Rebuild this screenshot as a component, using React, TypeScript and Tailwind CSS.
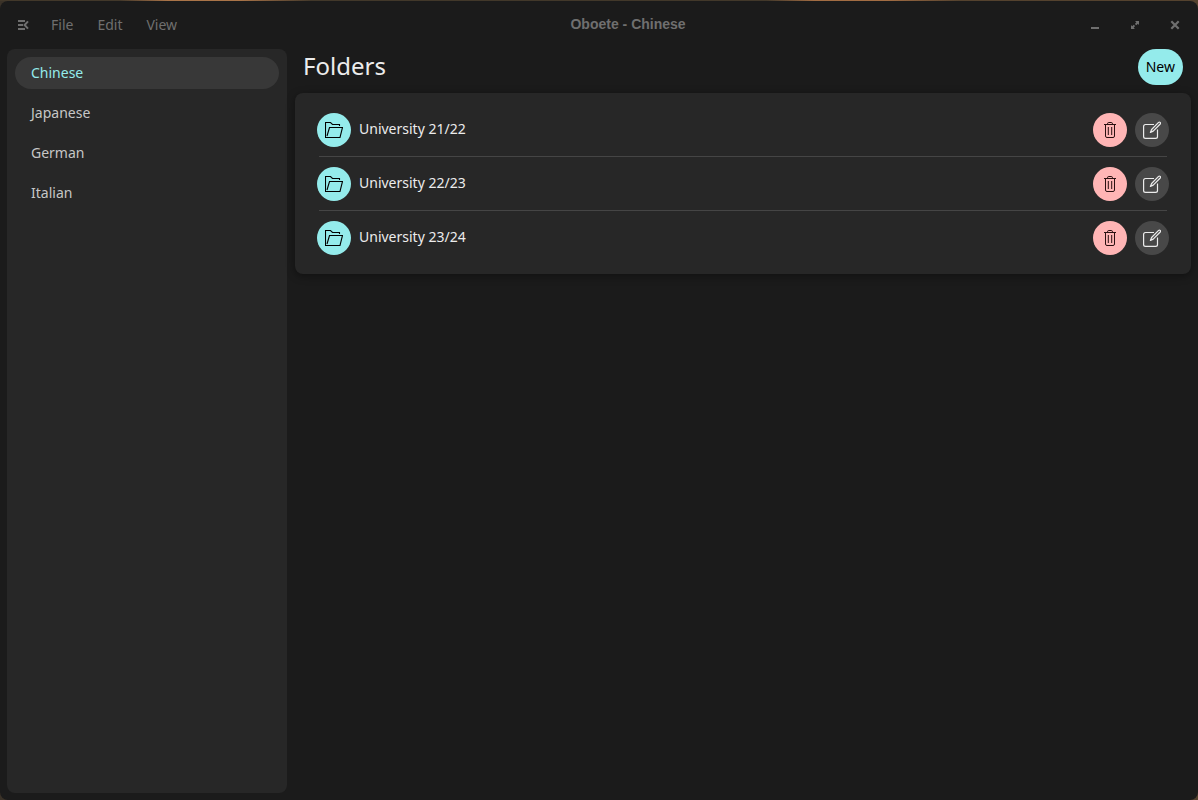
import { useState } from "react";

const languages = ["Chinese", "Japanese", "German", "Italian"];
const folders = ["University 21/22", "University 22/23", "University 23/24"];
const menus = ["File", "Edit", "View"];

function SidebarIcon() {
  return (
    <svg width="16" height="16" viewBox="0 0 16 16" fill="none" stroke="currentColor" strokeWidth="2" aria-hidden="true">
      <path d="M3 4H10M3 8H8M3 12H10" />
      <path d="M13 4.4L9.6 8L13 11.6" />
    </svg>
  );
}

function MinimizeIcon() {
  return (
    <svg width="16" height="16" viewBox="0 0 16 16" fill="currentColor" aria-hidden="true">
      <path d="M4 10H12V12H4Z" />
    </svg>
  );
}

function MaximizeIcon() {
  return (
    <svg width="16" height="16" viewBox="0 0 16 16" fill="currentColor" aria-hidden="true">
      <path d="M8 4H12V8L10.8 6.8L9.3 8.3L7.9 6.9L9.3 5.3Z" />
      <path d="M8 12H4V8L5.2 9.2L6.7 7.7L8.1 9.1L6.7 10.7Z" />
    </svg>
  );
}

function CloseIcon() {
  return (
    <svg width="16" height="16" viewBox="0 0 16 16" fill="none" stroke="currentColor" strokeWidth="2.2" aria-hidden="true">
      <path d="M4.3 4.3L11.7 11.7M11.7 4.3L4.3 11.7" />
    </svg>
  );
}

function FolderIcon() {
  return (
    <svg width="18" height="18" viewBox="0 0 18 18" fill="none" stroke="currentColor" strokeWidth="1.1" aria-hidden="true">
      <path d="M14.5 5V3.5H7.5L5.5 1.5H0.5V16.5H15L17.5 6.5H4.5L2 15" />
    </svg>
  );
}

function TrashIcon() {
  return (
    <svg width="18" height="18" viewBox="0 0 18 18" fill="none" stroke="currentColor" aria-hidden="true">
      <path d="M3 3.5H15M6.5 3.5V2.8Q6.5 1.5 7.8 1.5H10.2Q11.5 1.5 11.5 2.8V3.5" />
      <path d="M4.5 3.5V15Q4.5 16.5 6 16.5H12Q13.5 16.5 13.5 15V3.5" />
      <path d="M7.3 6V14M10.7 6V14" />
    </svg>
  );
}

function EditIcon() {
  return (
    <svg width="18" height="18" viewBox="0 0 18 18" fill="none" stroke="currentColor" strokeWidth="1.2" strokeLinejoin="round" aria-hidden="true">
      <path d="M11 3.5H2.5Q0.6 3.5 0.6 5.4V15.5Q0.6 17.4 2.5 17.4H12.6Q14.5 17.4 14.5 15.5V8.5" />
      <path d="M7.4 11.4L8.6 8.5L15.6 1.4Q16.4 0.7 17.2 1.4Q17.9 2.2 17.2 3L10.2 10.1Z" />
    </svg>
  );
}

const roundButton = "flex size-[34px] shrink-0 items-center justify-center rounded-full";

export default function App() {
  const [active, setActive] = useState("Chinese");

  return (
    <div className="flex min-h-screen flex-col bg-linear-to-r from-[#3a3228] via-[#3b3025] to-[#54422e] font-['Noto_Sans',sans-serif] text-sm text-[#ececec]">
      <div className="h-px bg-[linear-gradient(90deg,#42382a_0%,#42382a_10%,#aa7448_14%,#aa7448_20%,#42382a_26%,#42382a_64%,#a36d43_68%,#a36d43_74%,#54422e_80%)]" />
      <div className="flex grow flex-col rounded-lg bg-[#1b1b1b]">
        <header className="flex h-12 items-center px-[7px] text-[#6f6f6f]">
          <div className="flex items-center">
            <button aria-label="Toggle sidebar" className="flex size-8 items-center justify-center">
              <SidebarIcon />
            </button>
            <nav className="flex">
              {menus.map((name) => (
                <button key={name} className="px-3 leading-8">
                  {name}
                </button>
              ))}
            </nav>
          </div>
          <h1 className="grow pr-3 pb-0.5 text-center font-['Liberation_Sans',sans-serif] font-bold">Oboete - {active}</h1>
          <div className="flex justify-end gap-2">
            <button aria-label="Minimize" className="flex size-8 items-center justify-center">
              <MinimizeIcon />
            </button>
            <button aria-label="Maximize" className="flex size-8 items-center justify-center">
              <MaximizeIcon />
            </button>
            <button aria-label="Close" className="flex size-8 items-center justify-center">
              <CloseIcon />
            </button>
          </div>
        </header>

        <div className="flex grow gap-2 px-[7px] pb-[7px]">
          <nav className="flex w-[280px] shrink-0 flex-col gap-2 rounded-lg bg-[#272727] p-2">
            {languages.map((name) => (
              <button
                key={name}
                onClick={() => setActive(name)}
                className={
                  name === active
                    ? "h-8 rounded-full bg-[#383838] px-4 text-left text-[#94ebeb]"
                    : "h-8 rounded-full px-4 text-left text-[#c6c6c6]"
                }
              >
                {name}
              </button>
            ))}
          </nav>

          <main className="flex min-w-0 grow flex-col gap-2">
            <div className="flex items-center justify-between px-2">
              <h2 className="pb-0.5 text-2xl">Folders</h2>
              <button className="h-9 rounded-full bg-[#94ebeb] px-2 text-black">New</button>
            </div>
            <ul className="rounded-lg bg-[#272727] px-6 py-2.5 shadow-[0_2px_8px_rgba(0,0,0,0.4)]">
              {folders.map((name) => (
                <li key={name} className="border-b border-[#454545] last:border-b-0">
                  <div className="-mx-0.5 flex items-center gap-2 pt-[10px] pb-[9px]">
                    <button aria-label={`Open ${name}`} className={`${roundButton} bg-[#94ebeb] text-black`}>
                      <FolderIcon />
                    </button>
                    <span className="grow pb-0.5">{name}</span>
                    <button aria-label={`Delete ${name}`} className={`${roundButton} bg-[#ffb5b5] text-[#2a1010]`}>
                      <TrashIcon />
                    </button>
                    <button aria-label={`Edit ${name}`} className={`${roundButton} bg-[#484848] text-[#ececec]`}>
                      <EditIcon />
                    </button>
                  </div>
                </li>
              ))}
            </ul>
          </main>
        </div>
      </div>
    </div>
  );
}
